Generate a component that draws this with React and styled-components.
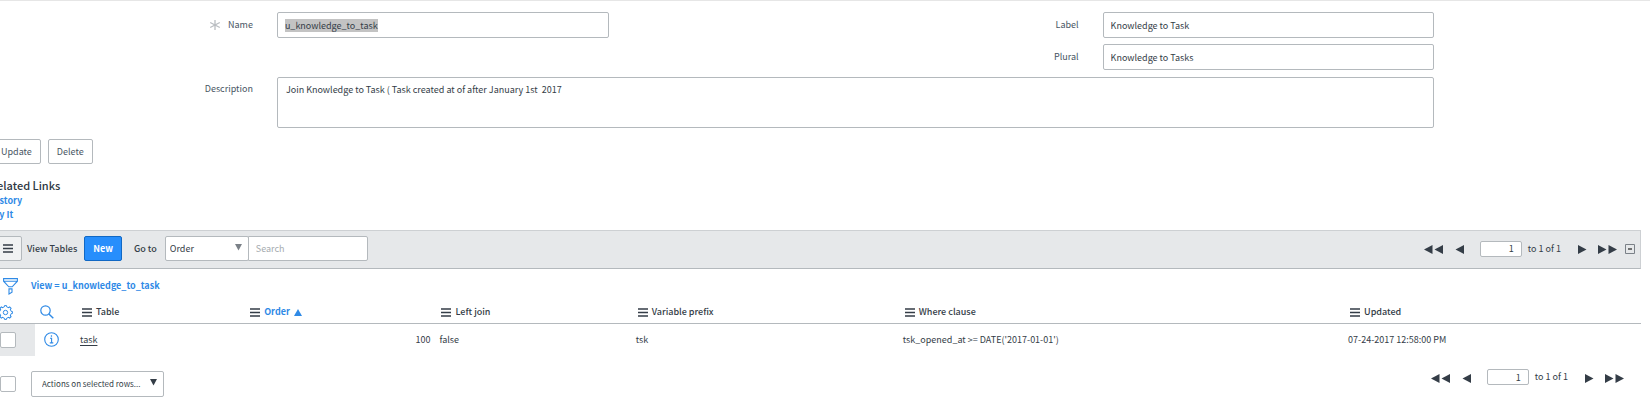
import React, { useEffect, useRef } from "react";
import styled, { createGlobalStyle } from "styled-components";

const GlobalStyle = createGlobalStyle`
  * {
    box-sizing: border-box;
  }

  body {
    margin: 0;
    overflow-x: hidden;
    background-color: #fff;
    color: #343d47;
    font-family: "Noto Sans CJK SC", "Noto Sans", sans-serif;
    font-size: 9px;
    line-height: 14px;
  }

  button,
  input,
  select,
  textarea {
    margin: 0;
    color: inherit;
    font: inherit;
    outline: none;
  }

  ::selection {
    background-color: #c3c3c3;
    color: #343d47;
  }
`;

const StyledPage = styled.main`
  margin-left: -8px;
  border-top: 1px solid #e6e6e6;
`;

const StyledForm = styled.form`
  display: grid;
  grid-template-columns: 261fr 332fr 446fr 332fr;
  gap: 6px 24px;
  padding: 11px 13% 0 0;
`;

const StyledLabel = styled.label`
  display: flex;
  grid-column: ${(props) => props.$column};
  align-items: center;
  justify-content: flex-end;
  gap: 7px;
  height: 26px;
  color: #485563;
`;

const StyledInput = styled.input`
  width: 100%;
  height: 26px;
  padding: 0 7px;
  border: 1px solid #b4b9bd;
  border-radius: 2px;
  background-color: #fff;
`;

const StyledTextArea = styled.textarea`
  grid-column: 2 / -1;
  height: 51px;
  margin-top: 1px;
  padding: 5px 8px;
  border: 1px solid #b4b9bd;
  border-radius: 2px;
  background-color: #fff;
  resize: none;
`;

const StyledActions = styled.div`
  display: flex;
  gap: 7px;
  margin-top: 11px;
`;

const StyledButton = styled.button`
  height: 25px;
  padding: 0 8px;
  border: 1px solid ${(props) => (props.$primary ? "#1168c4" : "#b4b9bd")};
  border-radius: 2px;
  background-color: ${(props) => (props.$primary ? "#278efc" : "#fff")};
  color: ${(props) => (props.$primary ? "#fff" : "#485563")};
  font-weight: ${(props) => (props.$primary ? 700 : 400)};
`;

const StyledRelated = styled.section`
  margin: 13px 0 8px -2px;
`;

const StyledTitle = styled.h2`
  margin: 0;
  font-size: 11px;
  font-weight: 500;
  line-height: 17px;
  color: #2e3742;
`;

const StyledLinks = styled.nav`
  display: flex;
  flex-direction: column;
  align-items: flex-start;
`;

const StyledLink = styled.a`
  color: #2f8ae6;
  font-weight: 700;
  text-decoration: none;
`;

const StyledToolbar = styled.div`
  display: flex;
  align-items: center;
  height: 39px;
  margin-right: 9px;
  padding: 0 5px 2px 0;
  border: 1px solid #cdd0d3;
  border-bottom-color: #b4b9bd;
  background-color: #e6e8ea;
`;

const StyledMenuButton = styled.button`
  display: flex;
  align-items: center;
  justify-content: flex-end;
  width: 29px;
  height: 25px;
  padding: 0 8px 0 0;
  border: 1px solid #b4b9bd;
  border-radius: 2px;
  background-color: #f1f2f3;
`;

const StyledToolbarText = styled.span`
  margin: 0 7px 0 5px;
  font-weight: 500;
`;

const StyledGoTo = styled.label`
  margin: 0 8px 0 12px;
  font-weight: 500;
`;

const StyledSelectWrap = styled.div`
  position: relative;
  width: ${(props) => props.$width};

  svg {
    position: absolute;
    top: 7px;
    right: 7px;
    pointer-events: none;
  }
`;

const StyledSelect = styled.select`
  width: 100%;
  height: ${(props) => (props.$small ? "26px" : "25px")};
  padding: 0 16px 0 ${(props) => (props.$small ? "10px" : "4px")};
  border: 1px solid #b4b9bd;
  border-radius: 2px;
  background-color: #fff;
  font-size: ${(props) => (props.$small ? "8px" : "9px")};
  appearance: none;
`;

const StyledSearch = styled.input`
  width: 120px;
  height: 25px;
  margin-left: -1px;
  padding: 0 7px;
  border: 1px solid #b4b9bd;
  border-radius: 0 2px 2px 0;
  background-color: #fff;

  &::placeholder {
    color: #a6abb0;
    opacity: 1;
  }
`;

const StyledPager = styled.div`
  display: flex;
  align-items: center;
  margin-left: auto;
`;

const StyledIconButton = styled.button`
  display: flex;
  padding: 0;
  border: 0;
  background: none;
`;

const StyledPagerButton = styled(StyledIconButton)`
  margin: 2px ${(props) => (props.$back ? "12px" : "0")} 0
    ${(props) => (props.$back ? "0" : "11px")};
`;

const StyledPageInput = styled.input`
  width: 42px;
  height: 16px;
  margin: 0 6px 0 4px;
  padding: 0 7px;
  border: 1px solid #b4b9bd;
  border-radius: 2px;
  background-color: #fff;
  text-align: right;
`;

const StyledPagerText = styled.span`
  margin-right: 6px;
`;

const StyledCollapse = styled(StyledIconButton)`
  margin-left: 8px;
`;

const StyledFilter = styled.div`
  display: flex;
  align-items: center;
  gap: 13px;
  height: 34px;
  padding-left: 11px;
`;

const StyledTable = styled.table`
  width: calc(100% - 9px);
  border-collapse: collapse;
  table-layout: fixed;
`;

const StyledCol = styled.col`
  width: ${(props) => props.$width};
`;

const StyledHead = styled.th`
  height: 20px;
  padding: 0 4px 1px ${(props) => props.$indent || "6px"};
  border-bottom: 1px solid #b4b9bd;
  color: ${(props) => (props.$sorted ? "#2f8ae6" : "inherit")};
  font-weight: ${(props) => (props.$sorted ? 700 : 500)};
  text-align: left;
`;

const StyledHeadContent = styled.div`
  display: flex;
  align-items: center;
  gap: 4px;
`;

const StyledCell = styled.td`
  height: 33px;
  padding: 0 5px 0 ${(props) => props.$indent || "4px"};
  background-color: ${(props) => (props.$shaded ? "#e6e8ea" : "#fff")};
  text-align: ${(props) => (props.$right ? "right" : "left")};
`;

const StyledRecordLink = styled.a`
  color: inherit;
  text-underline-offset: 2px;
`;

const StyledCheckbox = styled.input`
  display: block;
  width: 16px;
  height: 16px;
  border: 1px solid #b4b9bd;
  border-radius: 2px;
  background-color: #fff;
  appearance: none;
`;

const StyledFooter = styled.div`
  display: flex;
  align-items: center;
  gap: 15px;
  margin-top: 13px;
  padding: 0 26px 0 8px;
`;

const StyledFooterPager = styled(StyledPager)`
  padding-bottom: 14px;
`;

function MenuIcon() {
  return (
    <svg width="10" height="9" viewBox="0 0 10 9" aria-hidden="true">
      <path d="M0 1h10M0 4.5h10M0 8h10" stroke="#343d47" strokeWidth="1.4" />
    </svg>
  );
}

function DownIcon({ color = "#343d47" }) {
  return (
    <svg width="7" height="8" viewBox="0 0 7 8" aria-hidden="true">
      <path d="M0 1h7L3.5 7.5z" fill={color} />
    </svg>
  );
}

function ArrowIcon({ back, double }) {
  const width = double ? 19 : 9;
  return (
    <svg width={width} height="9" viewBox={`0 0 ${width} 9`} aria-hidden="true">
      <g fill="#343d47" transform={back ? `matrix(-1 0 0 1 ${width} 0)` : undefined}>
        <path d="M0 0l8.5 4.5L0 9z" />
        {double && <path d="M10.5 0l8.5 4.5L10.5 9z" />}
      </g>
    </svg>
  );
}

function RequiredIcon() {
  return (
    <svg width="12" height="12" viewBox="0 0 12 12" aria-hidden="true">
      <path
        d="M6 1v10M1.2 3.5l9.6 5M10.8 3.5l-9.6 5"
        stroke="#b9bdc1"
        strokeWidth="1.3"
      />
    </svg>
  );
}

function FilterIcon() {
  return (
    <svg width="15" height="17" viewBox="0 0 15 17" fill="none" stroke="#2f8ae6" aria-hidden="true">
      <path d="M.6.6h13.8v2.6L9.2 8.8H5.8L.6 3.2zM.6 3.3h13.8M6 10.9h3v3.4l-3 1.7z" strokeWidth="1.1" />
    </svg>
  );
}

function GearIcon() {
  const teeth = [0, 45, 90, 135, 180, 225, 270, 315];
  return (
    <svg width="15" height="15" viewBox="0 0 15 15" fill="none" stroke="#2f8ae6" aria-hidden="true">
      {teeth.map((angle) => (
        <path
          key={angle}
          d="M5.3 2.3L6.3 1.9L6.5.6h2l.2 1.3L9.7 2.3"
          transform={`rotate(${angle} 7.5 7.5)`}
        />
      ))}
      <circle cx="7.5" cy="7.5" r="2.2" />
    </svg>
  );
}

function SearchIcon() {
  return (
    <svg width="14" height="14" viewBox="0 0 14 14" fill="none" stroke="#2f8ae6" aria-hidden="true">
      <circle cx="5.5" cy="5.5" r="4.7" strokeWidth="1.2" />
      <path d="M8.9 8.9l4.4 4.4" strokeWidth="1.4" />
    </svg>
  );
}

function InfoIcon() {
  return (
    <svg width="15" height="15" viewBox="0 0 15 15" fill="none" stroke="#2f8ae6" aria-hidden="true">
      <circle cx="7.5" cy="7.5" r="6.8" strokeWidth="1.1" />
      <path d="M6 6.3h1.6v4.4M5.8 10.9h3.5" strokeWidth="1.1" />
      <circle cx="7.4" cy="4" r=".5" fill="#2f8ae6" strokeWidth=".6" />
    </svg>
  );
}

function CollapseIcon() {
  return (
    <svg width="10" height="10" viewBox="0 0 10 10" fill="none" aria-hidden="true">
      <path d="M.5.5h9v9h-9z" stroke="#7b8188" />
      <path d="M3 5h4" stroke="#222" strokeWidth="1.2" />
    </svg>
  );
}

function SortIcon() {
  return (
    <svg width="8" height="7" viewBox="0 0 8 7" aria-hidden="true">
      <path d="M4 0l4 7H0z" fill="#2f8ae6" />
    </svg>
  );
}

function PagerControls() {
  return (
    <>
      <StyledPagerButton $back aria-label="First page">
        <ArrowIcon back double />
      </StyledPagerButton>
      <StyledPagerButton $back aria-label="Previous page">
        <ArrowIcon back />
      </StyledPagerButton>
      <StyledPageInput defaultValue="1" aria-label="Skip to row" />
      <StyledPagerText>to 1 of 1</StyledPagerText>
      <StyledPagerButton aria-label="Next page">
        <ArrowIcon />
      </StyledPagerButton>
      <StyledPagerButton aria-label="Last page">
        <ArrowIcon double />
      </StyledPagerButton>
    </>
  );
}

function RecordForm() {
  const nameRef = useRef(null);

  useEffect(() => {
    nameRef.current.focus();
    nameRef.current.select();
  }, []);

  return (
    <StyledForm>
      <StyledLabel htmlFor="name" $column="1">
        <RequiredIcon />
        Name
      </StyledLabel>
      <StyledInput id="name" ref={nameRef} defaultValue="u_knowledge_to_task" />
      <StyledLabel htmlFor="label" $column="3">
        Label
      </StyledLabel>
      <StyledInput id="label" defaultValue="Knowledge to Task" />
      <StyledLabel htmlFor="plural" $column="3">
        Plural
      </StyledLabel>
      <StyledInput id="plural" defaultValue="Knowledge to Tasks" />
      <StyledLabel htmlFor="description" $column="1">
        Description
      </StyledLabel>
      <StyledTextArea
        id="description"
        defaultValue="Join Knowledge to Task ( Task created at of after January 1st  2017"
      />
    </StyledForm>
  );
}

const columns = [
  { name: "Table", width: "10.2%" },
  { name: "Order", width: "11.6%", sorted: true },
  { name: "Left join", width: "11.9%" },
  { name: "Variable prefix", width: "16.2%" },
  { name: "Where clause", width: "27%" },
  { name: "Updated", width: "auto" },
];

function ViewTables() {
  return (
    <section>
      <StyledToolbar>
        <StyledMenuButton aria-label="List controls">
          <MenuIcon />
        </StyledMenuButton>
        <StyledToolbarText>View Tables</StyledToolbarText>
        <StyledButton $primary>New</StyledButton>
        <StyledGoTo htmlFor="goto">Go to</StyledGoTo>
        <StyledSelectWrap $width="84px">
          <StyledSelect id="goto">
            <option>Order</option>
          </StyledSelect>
          <DownIcon color="#7b8188" />
        </StyledSelectWrap>
        <StyledSearch placeholder="Search" aria-label="Search" />
        <StyledPager>
          <PagerControls />
          <StyledCollapse aria-label="Collapse list">
            <CollapseIcon />
          </StyledCollapse>
        </StyledPager>
      </StyledToolbar>
      <StyledFilter>
        <StyledIconButton aria-label="Show filter">
          <FilterIcon />
        </StyledIconButton>
        <StyledLink href="#filter">View = u_knowledge_to_task</StyledLink>
      </StyledFilter>
      <StyledTable>
        <colgroup>
          <StyledCol $width="43px" />
          <StyledCol $width="41px" />
          {columns.map((column) => (
            <StyledCol key={column.name} $width={column.width} />
          ))}
        </colgroup>
        <thead>
          <tr>
            <StyledHead>
              <StyledIconButton aria-label="Personalize list">
                <GearIcon />
              </StyledIconButton>
            </StyledHead>
            <StyledHead $indent="5px">
              <StyledIconButton aria-label="Search rows">
                <SearchIcon />
              </StyledIconButton>
            </StyledHead>
            {columns.map((column) => (
              <StyledHead key={column.name} $sorted={column.sorted}>
                <StyledHeadContent>
                  <MenuIcon />
                  {column.name}
                  {column.sorted && <SortIcon />}
                </StyledHeadContent>
              </StyledHead>
            ))}
          </tr>
        </thead>
        <tbody>
          <tr>
            <StyledCell $shaded $indent="8px">
              <StyledCheckbox type="checkbox" aria-label="Select task" />
            </StyledCell>
            <StyledCell $indent="9px">
              <StyledIconButton aria-label="Preview task">
                <InfoIcon />
              </StyledIconButton>
            </StyledCell>
            <StyledCell>
              <StyledRecordLink href="#task">task</StyledRecordLink>
            </StyledCell>
            <StyledCell $right>100</StyledCell>
            <StyledCell>false</StyledCell>
            <StyledCell>tsk</StyledCell>
            <StyledCell>tsk_opened_at &gt;= DATE('2017-01-01')</StyledCell>
            <StyledCell>07-24-2017 12:58:00 PM</StyledCell>
          </tr>
        </tbody>
      </StyledTable>
      <StyledFooter>
        <StyledCheckbox type="checkbox" aria-label="Select all" />
        <StyledSelectWrap $width="133px">
          <StyledSelect $small aria-label="Actions on selected rows">
            <option>Actions on selected rows...</option>
          </StyledSelect>
          <DownIcon />
        </StyledSelectWrap>
        <StyledFooterPager>
          <PagerControls />
        </StyledFooterPager>
      </StyledFooter>
    </section>
  );
}

function App() {
  return (
    <>
      <GlobalStyle />
      <StyledPage>
        <RecordForm />
        <StyledActions>
          <StyledButton>Update</StyledButton>
          <StyledButton>Delete</StyledButton>
        </StyledActions>
        <StyledRelated>
          <StyledTitle>Related Links</StyledTitle>
          <StyledLinks>
            <StyledLink href="#history">History</StyledLink>
            <StyledLink href="#try">Try It</StyledLink>
          </StyledLinks>
        </StyledRelated>
        <ViewTables />
      </StyledPage>
    </>
  );
}

export default App;
